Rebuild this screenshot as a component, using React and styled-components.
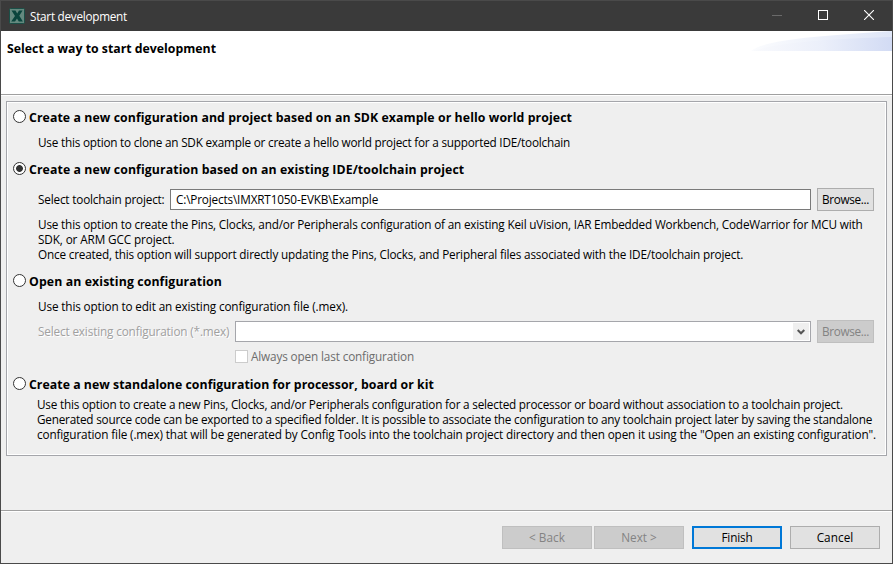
import React from 'react';
import styled, { createGlobalStyle } from 'styled-components';

const GlobalStyle = createGlobalStyle`
  * { box-sizing: border-box; }
  body { margin: 0; }
`;

const Window = styled.div`
  width: 893px;
  height: 564px;
  display: flex;
  flex-direction: column;
  border: 1px solid #4a4a4a;
  background: #efefef;
  color: #000;
  font: 11.75px/15px "Open Sans", "Noto Sans", sans-serif;
  white-space: nowrap;
  overflow: hidden;
`;

const TitleBar = styled.header`
  height: 30px;
  flex: none;
  display: flex;
  align-items: center;
  padding-left: 8px;
  background: #3a3a3a;
  color: #fff;
`;

const AppIcon = styled.svg`
  width: 16px;
  height: 16px;
  margin: -1px 5px 0 0;
`;

const WindowTitle = styled.div`
  flex: 1;
  letter-spacing: -0.27px;
`;

const WindowButton = styled.div`
  width: 46px;
  height: 30px;
  display: flex;
  align-items: center;
  justify-content: center;
  padding-bottom: 2px;
`;

const Banner = styled.div`
  height: 63px;
  flex: none;
  display: flex;
  justify-content: space-between;
  background: #fff;
`;

const Heading = styled.div`
  font-size: 12.3px;
  font-weight: 700;
  letter-spacing: ${(p) => p.$ls}px;
`;

const BannerHeading = styled(Heading)`
  padding: 10px 0 0 6px;
`;

const Swoosh = styled.svg`
  width: 141px;
  height: 20px;
`;

const Separator = styled.div`
  height: 2px;
  flex: none;
  border-top: 1px solid #a0a0a0;
  background: #fff;
`;

const Content = styled.main`
  flex: 1;
  padding: 5px;
`;

const OptionsGroup = styled.section`
  width: 881px;
  height: 355px;
  display: flex;
  flex-direction: column;
  padding-left: 6px;
  border: 1px solid #a5a6ab;
  box-shadow: inset 0 0 0 1px #fff;
`;

const OptionHeader = styled.div`
  display: flex;
  gap: 3px;
  align-items: center;
  height: 15px;
  margin-top: ${(p) => p.$top}px;
`;

const Radio = styled.div`
  width: 13px;
  height: 13px;
  flex: none;
  margin-bottom: 2px;
  border: 1px solid #333;
  border-radius: 50%;
  background: ${(p) => (p.$checked ? 'radial-gradient(circle, #333 0 3px, #fff 3.8px)' : '#fff')};
`;

const Line = styled.div`
  letter-spacing: ${(p) => p.$ls}px;
`;

const Description = styled.div`
  margin: ${(p) => p.$top}px 0 0 ${(p) => p.$left || 25}px;
`;

const FieldRow = styled.div`
  display: flex;
  align-items: center;
  height: 23px;
  margin: ${(p) => p.$top}px 0 0 25px;
`;

const FieldLabel = styled.label`
  width: ${(p) => p.$width}px;
  letter-spacing: ${(p) => p.$ls}px;
  color: ${(p) => (p.$disabled ? '#a0a0a0' : '#000')};
  text-shadow: ${(p) => (p.$disabled ? '1px 1px 0 #fff' : 'none')};
`;

const TextField = styled.div`
  width: 641px;
  height: 21px;
  padding: 2px 5px;
  margin-right: 6px;
  border: 1px solid #7a7a7a;
  background: #fff;
  letter-spacing: -0.16px;
`;

const ComboBox = styled.div`
  width: 576px;
  height: 21px;
  display: flex;
  justify-content: flex-end;
  padding: 1px;
  margin-right: 6px;
  border: 1px solid #a5a6ab;
  background: #fff;
`;

const ComboArrow = styled.div`
  width: 16px;
  height: 17px;
  display: flex;
  align-items: center;
  justify-content: center;
  padding-right: 1px;
  background: #efefef;
`;

const Button = styled.div`
  width: ${(p) => p.$width || 90}px;
  height: 23px;
  display: flex;
  align-items: center;
  justify-content: center;
  letter-spacing: ${(p) => p.$ls}px;
  border: ${(p) => (p.$primary ? '2px solid #0078d7' : p.$disabled ? '1px solid #bfbfbf' : '1px solid #adadad')};
  background: ${(p) => (p.$disabled ? '#cccccc' : '#e1e1e1')};
  color: ${(p) => (p.$disabled ? '#838383' : '#000')};
`;

const CheckRow = styled.div`
  display: flex;
  align-items: center;
  gap: 3px;
  height: 15px;
  margin: 6px 0 0 222px;
  color: #6d6d6d;
  letter-spacing: -0.14px;
`;

const CheckBox = styled.div`
  width: 13px;
  height: 13px;
  border: 1px solid #ccc;
  background: #fff;
`;

const Footer = styled.footer`
  height: 51px;
  flex: none;
  display: flex;
  justify-content: flex-end;
  padding: 14px 12px 0 0;
`;

const NavButtons = styled.div`
  display: flex;
  gap: 2px;
  margin-right: 8px;
`;

const ActionButtons = styled.div`
  display: flex;
  gap: 8px;
`;

function Option({ top, title, ls, checked }) {
  return (
    <OptionHeader $top={top}>
      <Radio $checked={checked} />
      <Heading $ls={ls}>{title}</Heading>
    </OptionHeader>
  );
}

export default function App() {
  return (
    <Window>
      <GlobalStyle />
      <TitleBar>
        <AppIcon viewBox="0 0 16 16">
          <rect x="0.5" y="0.5" width="15" height="15" rx="1" fill="#64897f" stroke="#1b4f47" />
          <path d="M2.5 2.5h4l1.7 3 1.8-3h3.6L10.3 7.8l3.6 5.7H9.8L8 10.4l-2 3.1H2.2L6 7.9z" fill="#0a453d" />
        </AppIcon>
        <WindowTitle>Start development</WindowTitle>
        <WindowButton>
          <svg width="10" height="10"><path d="M0 5.5h10" stroke="#6a6a6a" /></svg>
        </WindowButton>
        <WindowButton>
          <svg width="10" height="10"><rect x="0.5" y="0.5" width="9" height="9" fill="none" stroke="#fff" /></svg>
        </WindowButton>
        <WindowButton>
          <svg width="10" height="10"><path d="M0 0l10 10M10 0L0 10" stroke="#fff" strokeWidth="1.1" /></svg>
        </WindowButton>
      </TitleBar>
      <Banner>
        <BannerHeading $ls={0}>Select a way to start development</BannerHeading>
        <Swoosh viewBox="0 0 141 20">
          <defs>
            <linearGradient id="outer" x1="0" x2="1"><stop offset="0" stopColor="#fbfcfe" /><stop offset="1" stopColor="#dfe6f7" /></linearGradient>
            <linearGradient id="inner" x1="0" x2="1"><stop offset="0" stopColor="#f9fafd" /><stop offset="0.5" stopColor="#ebeffa" /><stop offset="1" stopColor="#d2dbf4" /></linearGradient>
          </defs>
          <path d="M0 20C16 8 70 5 141 0V20z" fill="url(#outer)" />
          <path d="M2 20C28 11 80 8 141 6V20z" fill="url(#inner)" />
        </Swoosh>
      </Banner>
      <Separator />
      <Content>
        <OptionsGroup>
          <Option top={8} ls={0.083} title="Create a new configuration and project based on an SDK example or hello world project" />
          <Description $top={10}>
            <Line $ls={-0.216}>Use this option to clone an SDK example or create a hello world project for a supported IDE/toolchain</Line>
          </Description>
          <Option top={12} ls={0.093} checked title="Create a new configuration based on an existing IDE/toolchain project" />
          <FieldRow $top={11}>
            <FieldLabel $width={132} $ls={-0.175}>Select toolchain project:</FieldLabel>
            <TextField>C:\Projects\IMXRT1050-EVKB\Example</TextField>
            <Button $width={57} $ls={-0.32}>Browse...</Button>
          </FieldRow>
          <Description $top={6}>
            <Line $ls={-0.179}>Use this option to create the Pins, Clocks, and/or Peripherals configuration of an existing Keil uVision, IAR Embedded Workbench, CodeWarrior for MCU with</Line>
            <Line $ls={-0.12}>SDK, or ARM GCC project.</Line>
            <Line $ls={-0.18}>Once created, this option will support directly updating the Pins, Clocks, and Peripheral files associated with the IDE/toolchain project.</Line>
          </Description>
          <Option top={12} ls={0.11} title="Open an existing configuration" />
          <Description $top={10}>
            <Line $ls={-0.134}>Use this option to edit an existing configuration file (.mex).</Line>
          </Description>
          <FieldRow $top={6}>
            <FieldLabel $width={197} $ls={-0.15} $disabled>Select existing configuration (*.mex)</FieldLabel>
            <ComboBox>
              <ComboArrow>
                <svg width="8" height="6"><path d="M0.7 1L4 4.3 7.3 1" fill="none" stroke="#555" strokeWidth="2" /></svg>
              </ComboArrow>
            </ComboBox>
            <Button $width={57} $ls={-0.32} $disabled>Browse...</Button>
          </FieldRow>
          <CheckRow><CheckBox />Always open last configuration</CheckRow>
          <Option top={13} ls={0.035} title="Create a new standalone configuration for processor, board or kit" />
          <Description $top={5} $left={24}>
            <Line $ls={-0.207}>Use this option to create a new Pins, Clocks, and/or Peripherals configuration for a selected processor or board without association to a toolchain project.</Line>
            <Line $ls={-0.211}>Generated source code can be exported to a specified folder. It is possible to associate the configuration to any toolchain project later by saving the standalone</Line>
            <Line $ls={-0.141}>configuration file (.mex) that will be generated by Config Tools into the toolchain project directory and then open it using the "Open an existing configuration".</Line>
          </Description>
        </OptionsGroup>
      </Content>
      <Separator />
      <Footer>
        <NavButtons>
          <Button $ls={0.05} $disabled>&lt; Back</Button>
          <Button $ls={0} $disabled>Next &gt;</Button>
        </NavButtons>
        <ActionButtons>
          <Button $ls={-0.15} $primary>Finish</Button>
          <Button $ls={0.05}>Cancel</Button>
        </ActionButtons>
      </Footer>
    </Window>
  );
}
